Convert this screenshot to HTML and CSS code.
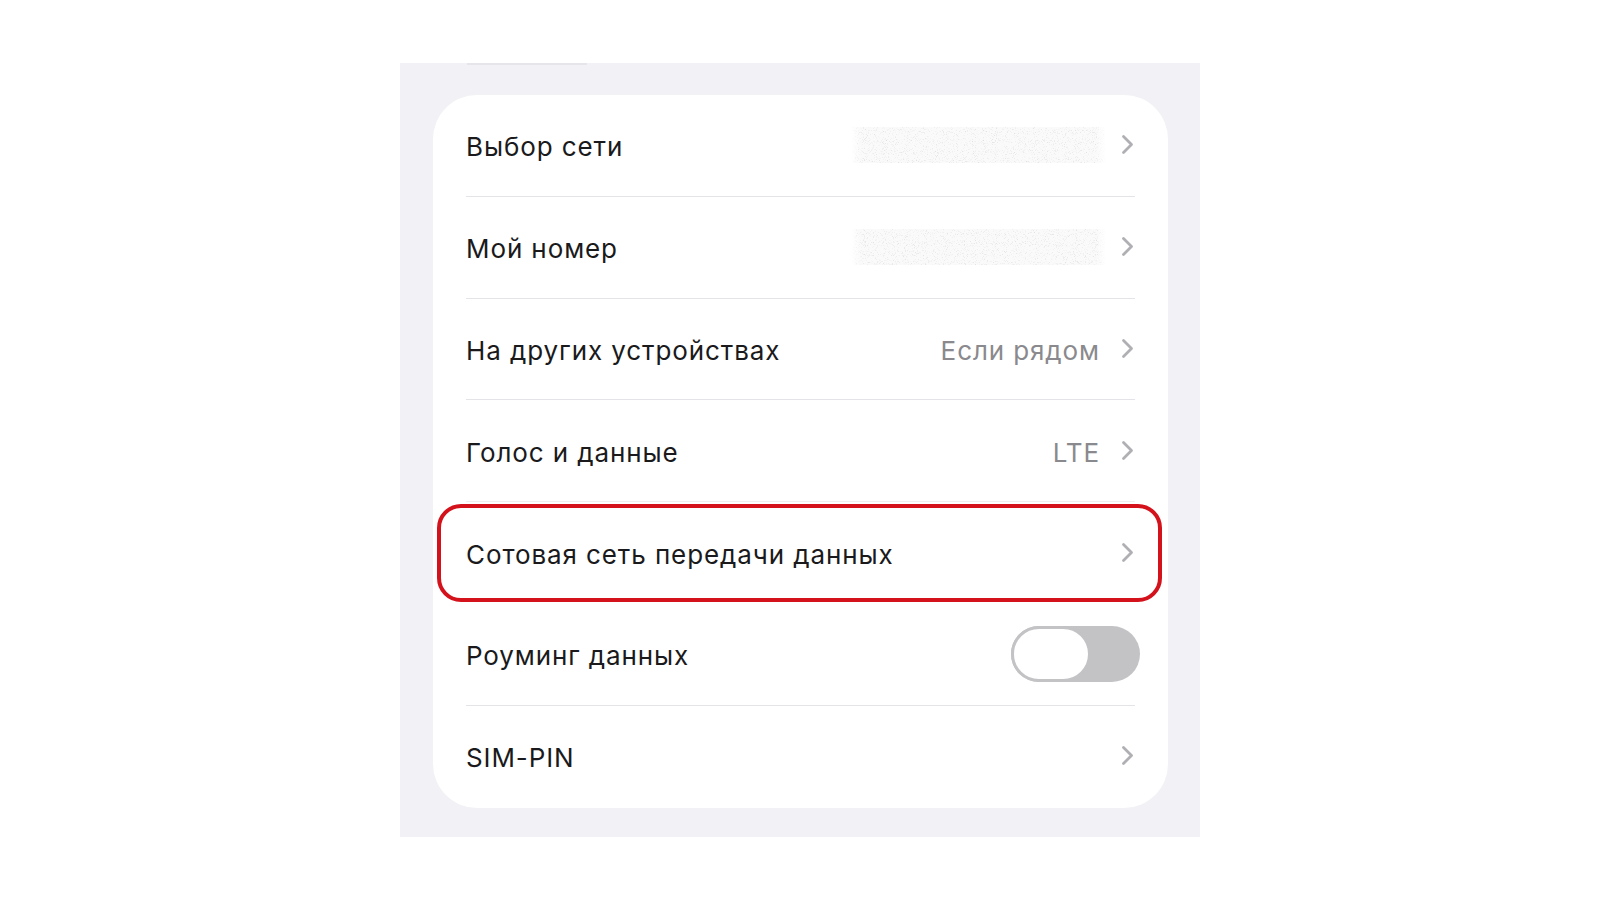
FILE: index.html
```html
<!DOCTYPE html>
<html lang="ru">
<head>
<meta charset="utf-8">
<title>Сотовая связь</title>
<link rel="stylesheet" href="styles.css">
</head>
<body>
<div class="panel">
  <div class="cutoff"></div>
  <div class="card">
    <div class="row">
      <span class="label">Выбор сети</span>
      <span class="right">
        <svg class="blur" width="255" height="36" viewBox="0 0 255 36"><defs><filter id="noise1" x="0" y="0" width="100%" height="100%"><feTurbulence type="fractalNoise" baseFrequency="1.1" numOctaves="2" seed="3"/><feColorMatrix type="matrix" values="0 0 0 0 0.7  0 0 0 0 0.7  0 0 0 0 0.7  0 0 0 2.6 -1.45"/></filter><linearGradient id="fade1" x1="0" x2="1" y1="0" y2="0"><stop offset="0" stop-color="#fff" stop-opacity="1"/><stop offset="0.04" stop-color="#fff" stop-opacity="0"/><stop offset="0.96" stop-color="#fff" stop-opacity="0"/><stop offset="1" stop-color="#fff" stop-opacity="1"/></linearGradient></defs><rect width="255" height="36" fill="#fafafa"/><rect width="255" height="36" filter="url(#noise1)"/><rect width="255" height="36" fill="url(#fade1)"/></svg>
        <svg class="chev" width="13" height="21" viewBox="0 0 13 21"><path d="M2.5 2.5 L10.5 10.5 L2.5 18.5" fill="none" stroke="#b0b0b4" stroke-width="2.8" stroke-linecap="round" stroke-linejoin="round"/></svg>
      </span>
    </div>
    <div class="row">
      <span class="label">Мой номер</span>
      <span class="right">
        <svg class="blur" width="255" height="36" viewBox="0 0 255 36"><defs><filter id="noise2" x="0" y="0" width="100%" height="100%"><feTurbulence type="fractalNoise" baseFrequency="1.1" numOctaves="2" seed="11"/><feColorMatrix type="matrix" values="0 0 0 0 0.7  0 0 0 0 0.7  0 0 0 0 0.7  0 0 0 2.6 -1.45"/></filter><linearGradient id="fade2" x1="0" x2="1" y1="0" y2="0"><stop offset="0" stop-color="#fff" stop-opacity="1"/><stop offset="0.04" stop-color="#fff" stop-opacity="0"/><stop offset="0.96" stop-color="#fff" stop-opacity="0"/><stop offset="1" stop-color="#fff" stop-opacity="1"/></linearGradient></defs><rect width="255" height="36" fill="#fafafa"/><rect width="255" height="36" filter="url(#noise2)"/><rect width="255" height="36" fill="url(#fade2)"/></svg>
        <svg class="chev" width="13" height="21" viewBox="0 0 13 21"><path d="M2.5 2.5 L10.5 10.5 L2.5 18.5" fill="none" stroke="#b0b0b4" stroke-width="2.8" stroke-linecap="round" stroke-linejoin="round"/></svg>
      </span>
    </div>
    <div class="row">
      <span class="label">На других устройствах</span>
      <span class="right">
        <span class="value">Если рядом</span>
        <svg class="chev" width="13" height="21" viewBox="0 0 13 21"><path d="M2.5 2.5 L10.5 10.5 L2.5 18.5" fill="none" stroke="#b0b0b4" stroke-width="2.8" stroke-linecap="round" stroke-linejoin="round"/></svg>
      </span>
    </div>
    <div class="row">
      <span class="label">Голос и данные</span>
      <span class="right">
        <span class="value">LTE</span>
        <svg class="chev" width="13" height="21" viewBox="0 0 13 21"><path d="M2.5 2.5 L10.5 10.5 L2.5 18.5" fill="none" stroke="#b0b0b4" stroke-width="2.8" stroke-linecap="round" stroke-linejoin="round"/></svg>
      </span>
    </div>
    <div class="row highlighted">
      <span class="label">Сотовая сеть передачи данных</span>
      <span class="right">
        <svg class="chev" width="13" height="21" viewBox="0 0 13 21"><path d="M2.5 2.5 L10.5 10.5 L2.5 18.5" fill="none" stroke="#b0b0b4" stroke-width="2.8" stroke-linecap="round" stroke-linejoin="round"/></svg>
      </span>
      <div class="highlight"></div>
    </div>
    <div class="row">
      <span class="label">Роуминг данных</span>
      <span class="right toggle-wrap">
        <span class="toggle"><span class="knob"></span></span>
      </span>
    </div>
    <div class="row last">
      <span class="label">SIM-PIN</span>
      <span class="right">
        <svg class="chev" width="13" height="21" viewBox="0 0 13 21"><path d="M2.5 2.5 L10.5 10.5 L2.5 18.5" fill="none" stroke="#b0b0b4" stroke-width="2.8" stroke-linecap="round" stroke-linejoin="round"/></svg>
      </span>
    </div>
  </div>
</div>
</body>
</html>
```

FILE: styles.css
```css
html, body {
  margin: 0;
  padding: 0;
  background: #ffffff;
}

body {
  font-family: Inter, "Liberation Sans", Arial, sans-serif;
  color: #1a1a1c;
}

.panel {
  width: 800px;
  height: 774px;
  margin: 63px auto 0;
  background: #f1f1f6;
  box-sizing: border-box;
  padding: 0 32px 0 33px;
  display: flex;
  flex-direction: column;
}

.cutoff {
  width: 120px;
  height: 2px;
  margin-left: 34px;
  background: #e6e6ea;
}

.card {
  margin-top: 30px;
  background: #ffffff;
  border-radius: 44px;
  display: flex;
  flex-direction: column;
}

.row {
  position: relative;
  height: 101.8px;
  box-sizing: border-box;
  margin: 0 33px;
  display: flex;
  align-items: center;
  justify-content: space-between;
  border-bottom: 1.5px solid #e4e4e8;
}

.row.last,
.row.highlighted {
  border-bottom-color: transparent;
}

.row:nth-child(4) {
  border-bottom-color: #efeff2;
}

.label {
  font-size: 26px;
  letter-spacing: 0.9px;
  padding-top: 3px;
}

.right {
  display: flex;
  align-items: center;
  gap: 21px;
}

.value {
  font-size: 26px;
  letter-spacing: 0.9px;
  color: #8a8a8e;
  padding-top: 3px;
}

.blur {
  display: block;
  margin-right: -6px;
}

.chev {
  display: block;
  margin-top: -1px;
  margin-right: 1px;
}

.highlight {
  position: absolute;
  top: 2px;
  bottom: 1px;
  left: -29px;
  right: -27px;
  border: 4px solid #d4121c;
  border-radius: 24px;
  pointer-events: none;
}

.toggle-wrap {
  margin-right: -5px;
}

.toggle {
  position: relative;
  width: 129px;
  height: 56px;
  border-radius: 28px;
  background: #c3c3c6;
  display: block;
}

.knob {
  position: absolute;
  left: 0;
  top: 0;
  width: 80px;
  height: 56px;
  box-sizing: border-box;
  border-radius: 28px;
  background: #ffffff;
  border: 3px solid #c3c3c6;
}
```
